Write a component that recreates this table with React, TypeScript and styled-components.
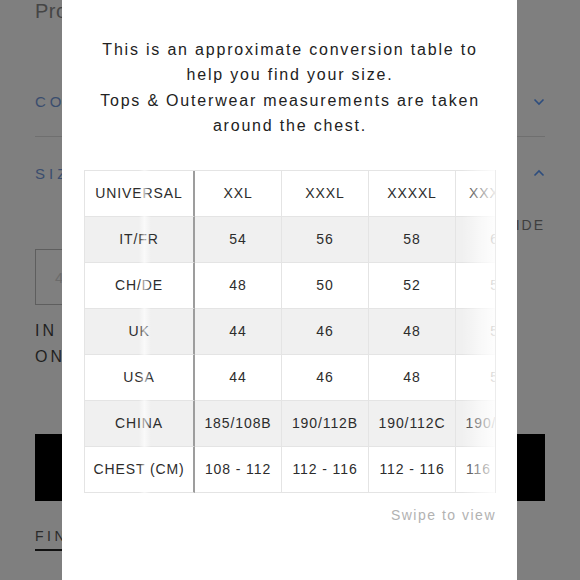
import React from "react";
import styled, { createGlobalStyle } from "styled-components";

const GlobalStyle = createGlobalStyle`
  html, body { margin: 0; padding: 0; }
  body {
    width: 580px;
    height: 580px;
    overflow: hidden;
    background: #7f7f7f;
    font-family: "Liberation Sans", Arial, sans-serif;
  }
  * { box-sizing: border-box; }
`;

const Page = styled.div`
  display: flex;
  flex-direction: column;
  padding: 0 35px;
  width: 580px;
  height: 580px;
`;

const ProductTitle = styled.div`
  font-size: 20px;
  line-height: 20px;
  color: #454545;
  letter-spacing: 0.5px;
  margin-top: 1px;
`;

const AccRow = styled.div<{ $h: number; $mt: number; $border?: boolean }>`
  display: flex;
  align-items: center;
  justify-content: space-between;
  height: ${(p) => p.$h}px;
  margin-top: ${(p) => p.$mt}px;
  border-bottom: ${(p) => (p.$border ? "1px solid #6f6f6f" : "none")};
`;

const AccLabel = styled.span`
  font-size: 15px;
  letter-spacing: 4px;
  color: #3a4d6e;
`;

const Chevron = styled.svg`
  width: 12px;
  height: 8px;
`;

const GuideLink = styled.div`
  align-self: flex-end;
  margin-top: 8px;
  font-size: 14px;
  line-height: 16px;
  letter-spacing: 2px;
  color: #3e3e3e;
`;

const SizeBox = styled.div`
  margin-top: 16px;
  height: 56px;
  width: 120px;
  border: 1px solid #5e5e5e;
  display: flex;
  align-items: center;
  padding-left: 19px;
  font-size: 15px;
  color: #6b6b6b;
`;

const StockText = styled.div`
  margin-top: 13px;
  font-size: 16px;
  line-height: 26px;
  letter-spacing: 3px;
  color: #1f1f1f;
`;

const BlackButton = styled.div`
  margin-top: 64px;
  height: 67px;
  background: #000;
  color: #fff;
  display: flex;
  align-items: center;
  justify-content: center;
  letter-spacing: 3px;
  font-size: 14px;
`;

const FindLink = styled.div`
  align-self: flex-start;
  margin-top: 27px;
  font-size: 14px;
  line-height: 16px;
  letter-spacing: 3.5px;
  color: #2a2a2a;
  padding-bottom: 5px;
  border-bottom: 2px solid #111;
`;

const Modal = styled.div`
  position: fixed;
  left: 62px;
  top: 0;
  width: 455px;
  height: 580px;
  background: #fff;
  display: flex;
  flex-direction: column;
  padding: 37px 21px 0 22px;
`;

const Intro = styled.div`
  text-align: center;
  font-size: 16px;
  line-height: 25.4px;
  letter-spacing: 1.8px;
  color: #222;
`;

const IntroLine = styled.div`
  white-space: nowrap;
`;

const TableWrap = styled.div`
  position: relative;
  margin-top: 31px;
  width: 412px;
  overflow: hidden;
`;

const Table = styled.table`
  border-collapse: separate;
  border-spacing: 0;
  table-layout: fixed;
  width: 458px;
  border-top: 1px solid #e4e4e4;
  border-left: 1px solid #e4e4e4;
`;

const Row = styled.tr<{ $shade: boolean }>`
  background: ${(p) => (p.$shade ? "#f0f0f0" : "#fff")};
`;

const Cell = styled.td<{ $first?: boolean }>`
  height: 46px;
  padding: 0;
  text-align: center;
  vertical-align: middle;
  font-size: 14px;
  letter-spacing: 0.9px;
  color: #2c2c2c;
  white-space: nowrap;
  border-bottom: 1px solid #e4e4e4;
  border-right: ${(p) => (p.$first ? "2px solid #9d9d9d" : "1px solid #e4e4e4")};
`;

const GhostStrip = styled.div`
  position: absolute;
  top: 0;
  bottom: 0;
  left: 55px;
  width: 12px;
  background: linear-gradient(
    90deg,
    rgba(255, 255, 255, 0) 0%,
    rgba(255, 255, 255, 0.65) 45%,
    rgba(255, 255, 255, 0) 100%
  );
  pointer-events: none;
`;

const Fade = styled.div`
  position: absolute;
  top: 0;
  bottom: 0;
  right: 0;
  width: 34px;
  border-right: 1px solid #ececec;
  background: linear-gradient(
    90deg,
    rgba(255, 255, 255, 0) 0%,
    rgba(255, 255, 255, 0.5) 50%,
    rgba(255, 255, 255, 0.9) 100%
  );
  pointer-events: none;
`;

const Swipe = styled.div`
  margin-top: 13px;
  text-align: right;
  font-size: 14px;
  line-height: 18px;
  letter-spacing: 1.5px;
  color: #b2b2b2;
`;

const rows: string[][] = [
  ["UNIVERSAL", "XXL", "XXXL", "XXXXL", "XXXXXL"],
  ["IT/FR", "54", "56", "58", "60"],
  ["CH/DE", "48", "50", "52", "54"],
  ["UK", "44", "46", "48", "50"],
  ["USA", "44", "46", "48", "50"],
  ["CHINA", "185/108B", "190/112B", "190/112C", "190/116C"],
  ["CHEST (CM)", "108 - 112", "112 - 116", "112 - 116", "116 - 120"],
];

const ChevronDown = () => (
  <Chevron viewBox="0 0 12 8">
    <polyline points="1.5,1.5 6,6 10.5,1.5" fill="none" stroke="#2d4d7e" strokeWidth="1.6" />
  </Chevron>
);

const ChevronUp = () => (
  <Chevron viewBox="0 0 12 8">
    <polyline points="1.5,6.5 6,2 10.5,6.5" fill="none" stroke="#2d4d7e" strokeWidth="1.6" />
  </Chevron>
);

export default function App() {
  return (
    <>
      <GlobalStyle />
      <Page>
        <ProductTitle>Product details</ProductTitle>
        <AccRow $h={70} $mt={46} $border>
          <AccLabel>COMPOSITION &amp; CARE</AccLabel>
          <ChevronDown />
        </AccRow>
        <AccRow $h={72} $mt={0}>
          <AccLabel>SIZE</AccLabel>
          <ChevronUp />
        </AccRow>
        <GuideLink>SIZE GUIDE</GuideLink>
        <SizeBox>44</SizeBox>
        <StockText>
          IN STOCK
          <br />
          ONLINE
        </StockText>
        <BlackButton>ADD TO BAG</BlackButton>
        <FindLink>FIND IN STORE</FindLink>
      </Page>
      <Modal>
        <Intro>
          <IntroLine>This is an approximate conversion table to</IntroLine>
          <IntroLine>help you find your size.</IntroLine>
          <IntroLine>Tops &amp; Outerwear measurements are taken</IntroLine>
          <IntroLine>around the chest.</IntroLine>
        </Intro>
        <TableWrap>
          <Table>
            <colgroup>
              <col style={{ width: 110 }} />
              <col style={{ width: 87 }} />
              <col style={{ width: 87 }} />
              <col style={{ width: 87 }} />
              <col style={{ width: 87 }} />
            </colgroup>
            <tbody>
              {rows.map((r, i) => (
                <Row key={r[0]} $shade={i % 2 === 1}>
                  {r.map((c, j) => (
                    <Cell key={j} $first={j === 0}>
                      {c}
                    </Cell>
                  ))}
                </Row>
              ))}
            </tbody>
          </Table>
          <GhostStrip />
          <Fade />
        </TableWrap>
        <Swipe>Swipe to view</Swipe>
      </Modal>
    </>
  );
}
